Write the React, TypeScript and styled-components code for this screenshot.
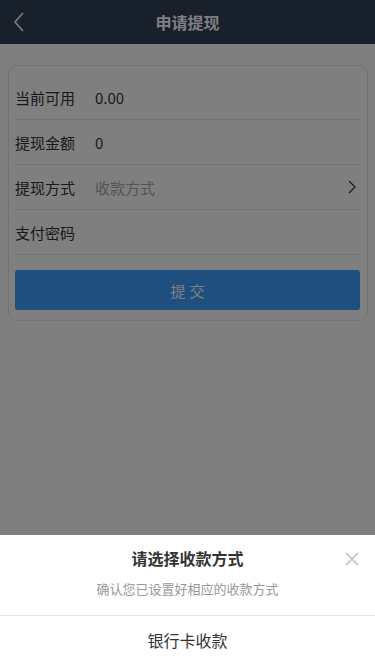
import React from "react";
import styled, { createGlobalStyle } from "styled-components";

const Global = createGlobalStyle`
  html, body { margin: 0; padding: 0; background: #fff; }
  body { font-family: "Noto Sans CJK SC", "Noto Sans", sans-serif; }
  * { box-sizing: border-box; }
`;

const Page = styled.div`
  width: 375px;
  height: 667px;
  position: relative;
  overflow: hidden;
  background: #ffffff;
`;

const Header = styled.div`
  height: 44px;
  background: #304056;
  display: flex;
  align-items: center;
  justify-content: center;
  position: relative;
`;

const BackBtn = styled.div`
  position: absolute;
  left: 12px;
  top: 11px;
  width: 14px;
  height: 22px;
  display: flex;
`;

const Title = styled.div`
  color: #ffffff;
  font-size: 16px;
  font-weight: 700;
`;

const Card = styled.div`
  margin: 21px 7px 0 8px;
  border: 1px solid #e6e6e6;
  border-radius: 8px;
  padding: 9px 7px 10px 6px;
  background: #fff;
`;

const Row = styled.div`
  height: 45px;
  display: flex;
  align-items: center;
  border-bottom: 1px solid #e2e2e2;
  font-size: 15px;
`;

const Label = styled.div`
  width: 80px;
  color: #333;
`;

const Value = styled.div<{ $muted?: boolean }>`
  flex: 1;
  color: ${(p) => (p.$muted ? "#aaa" : "#333")};
`;

const Chevron = styled.div`
  width: 12px;
  display: flex;
  justify-content: flex-end;
  margin-right: 4px;
`;

const Submit = styled.div`
  margin-top: 15px;
  height: 40px;
  border-radius: 3px;
  background: #3e9eff;
  color: #fff;
  font-size: 15px;
  letter-spacing: 4px;
  padding-left: 4px;
  display: flex;
  align-items: center;
  justify-content: center;
`;

const Mask = styled.div`
  position: absolute;
  inset: 0;
  background: rgba(0, 0, 0, 0.5);
`;

const Sheet = styled.div`
  position: absolute;
  left: 0;
  right: 0;
  bottom: 0;
  height: 132px;
  background: #fff;
`;

const SheetHead = styled.div`
  height: 81px;
  border-bottom: 1px solid #e5e5e5;
  display: flex;
  flex-direction: column;
  align-items: center;
  padding-top: 11px;
  position: relative;
`;

const SheetTitle = styled.div`
  font-size: 16px;
  font-weight: 700;
  color: #333;
  line-height: 24px;
`;

const SheetSub = styled.div`
  margin-top: 11px;
  font-size: 13px;
  color: #999;
  line-height: 16px;
`;

const Close = styled.div`
  position: absolute;
  right: 16px;
  top: 17px;
  width: 14px;
  height: 14px;
  display: flex;
`;

const Option = styled.div`
  height: 50px;
  display: flex;
  align-items: center;
  justify-content: center;
  font-size: 16px;
  color: #333;
  padding-bottom: 3px;
`;

export default function App() {
  return (
    <Page>
      <Global />
      <Header>
        <BackBtn>
          <svg width="14" height="22" viewBox="0 0 14 22">
            <path d="M11 2 L3 11 L11 20" fill="none" stroke="#fff" strokeWidth="1.6" />
          </svg>
        </BackBtn>
        <Title>申请提现</Title>
      </Header>
      <Card>
        <Row>
          <Label>当前可用</Label>
          <Value>0.00</Value>
        </Row>
        <Row>
          <Label>提现金额</Label>
          <Value>0</Value>
        </Row>
        <Row>
          <Label>提现方式</Label>
          <Value $muted>收款方式</Value>
          <Chevron>
            <svg width="8" height="14" viewBox="0 0 8 14">
              <path d="M1 1 L7 7 L1 13" fill="none" stroke="#333" strokeWidth="1.2" />
            </svg>
          </Chevron>
        </Row>
        <Row>
          <Label>支付密码</Label>
          <Value />
        </Row>
        <Submit>提交</Submit>
      </Card>
      <Mask />
      <Sheet>
        <SheetHead>
          <SheetTitle>请选择收款方式</SheetTitle>
          <SheetSub>确认您已设置好相应的收款方式</SheetSub>
          <Close>
            <svg width="14" height="14" viewBox="0 0 14 14">
              <path d="M1 1 L13 13 M13 1 L1 13" stroke="#ccc" strokeWidth="1.8" />
            </svg>
          </Close>
        </SheetHead>
        <Option>银行卡收款</Option>
      </Sheet>
    </Page>
  );
}
